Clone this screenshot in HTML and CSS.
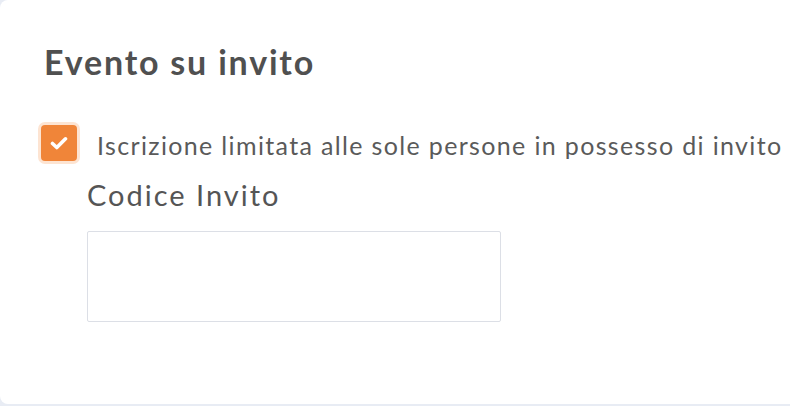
FILE: index.html
```html
<!DOCTYPE html>
<html lang="it">
<head>
    <meta charset="UTF-8">
    <meta name="viewport" content="width=device-width, initial-scale=1.0">
    <title>Evento su invito</title>
    <link rel="stylesheet" href="styles.css">
</head>
<body>
    <div class="card">
        <h2 class="title">Evento su invito</h2>
        <label class="check-row">
            <span class="check-box">
                <svg width="18" height="14" viewBox="0 0 18 14">
                    <path d="M2.5 7.5 L6.8 11.5 L15.5 2.8" fill="none" stroke="#fff" stroke-width="3.6" stroke-linecap="round" stroke-linejoin="round"/>
                </svg>
            </span>
            <span class="check-text">Iscrizione limitata alle sole persone in possesso di invito</span>
        </label>
        <div class="field">
            <div class="field-label">Codice Invito</div>
            <input class="field-input" type="text">
        </div>
    </div>
</body>
</html>
```

FILE: styles.css
```css
body {
  margin: 0;
  background: #e8ecf4;
  font-family: "Lato", "Open Sans", sans-serif;
  color: #555;
  overflow: hidden;
}
.card {
  background: #fff;
  width: 820px;
  height: 404px;
  border-radius: 8px;
  box-sizing: border-box;
  padding: 40px 0 0 44px;
}
.title {
  margin: 0;
  font-size: 34px;
  font-weight: 700;
  letter-spacing: 1.8px;
  line-height: 44px;
  color: #505050;
}
.check-row {
  display: flex;
  align-items: center;
  gap: 20px;
  margin-top: 41px;
  margin-left: -3px;
}
.check-box {
  flex: none;
  width: 36px;
  height: 36px;
  border-radius: 4px;
  background: #f08539;
  box-shadow: 0 0 0 3px #fde4d2;
  display: flex;
  align-items: center;
  justify-content: center;
}
.check-text {
  font-size: 25px;
  letter-spacing: 1.35px;
  padding-top: 4px;
  white-space: nowrap;
  color: #5a5a5a;
}
.field {
  margin-left: 43px;
  margin-top: 16px;
}
.field-label {
  font-size: 29px;
  letter-spacing: 2px;
  line-height: 36px;
  color: #555;
}
.field-input {
  display: block;
  margin-top: 18px;
  width: 414px;
  height: 91px;
  box-sizing: border-box;
  border: 1px solid #dcdfe6;
  border-radius: 2px;
  outline: none;
}
```
